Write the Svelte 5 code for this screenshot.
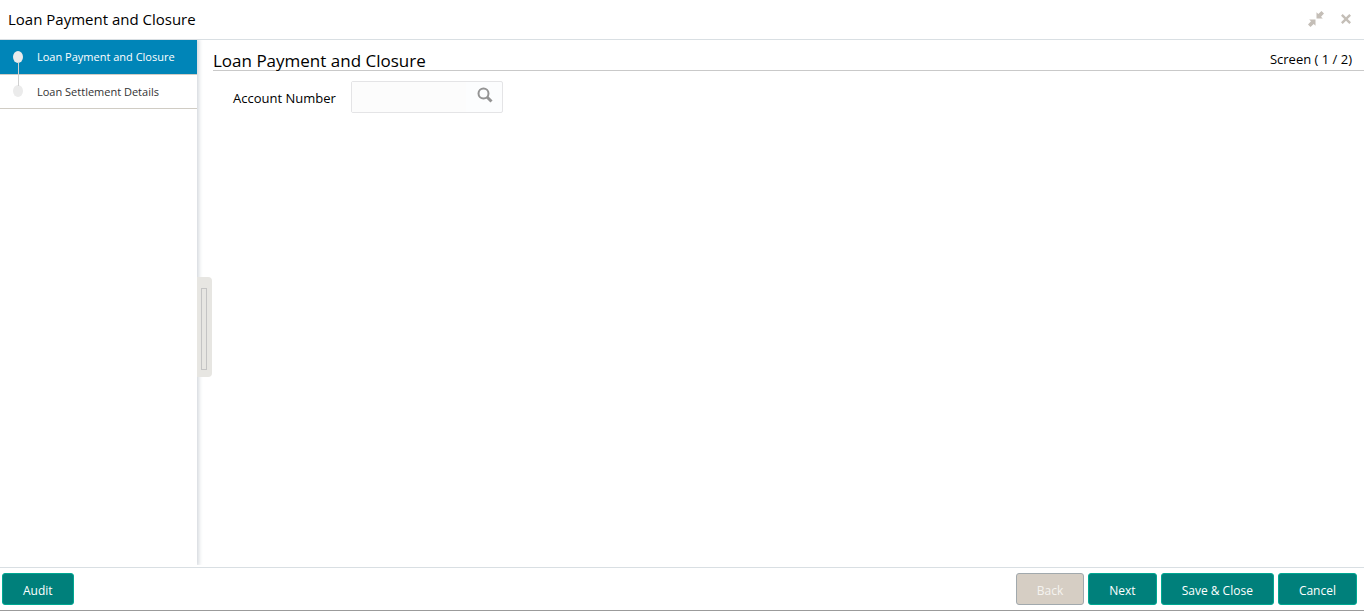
<script lang="ts">
  const title = 'Loan Payment and Closure';
  const steps = ['Loan Payment and Closure', 'Loan Settlement Details'];

  let current = $state(0);
  let account = $state('');

  function back() {
    if (current > 0) current -= 1;
  }

  function next() {
    if (current < steps.length - 1) current += 1;
  }
</script>

<div class="window">
  <header class="titlebar">
    <h1>{title}</h1>
    <div class="tools">
      <button class="tool" aria-label="Collapse">
        <svg width="16" height="16" viewBox="0 0 16 16">
          <path d="M8.5 7.5V1.2L10.3 3L13.5 0L16 2.5L13 5.7L14.8 7.5Z" />
          <path d="M7.5 8.5V14.8L5.7 13L2.5 16L0 13.5L3 10.3L1.2 8.5Z" />
        </svg>
      </button>
      <button class="tool" aria-label="Close">
        <svg width="10" height="10" viewBox="0 0 10 10">
          <path d="M0 1.7L1.7 0L5 3.3L8.3 0L10 1.7L6.7 5L10 8.3L8.3 10L5 6.7L1.7 10L0 8.3L3.3 5Z" />
        </svg>
      </button>
    </div>
  </header>

  <div class="body">
    <nav class="steps">
      {#each steps as step, i}
        <button class="step" class:active={i === current} onclick={() => (current = i)}>
          <span class="dot"></span>
          {step}
        </button>
      {/each}
      <span class="handle"></span>
    </nav>

    <main>
      <div class="heading">
        <h2>{steps[current]}</h2>
        <span>Screen ( {current + 1} / {steps.length})</span>
      </div>
      <div class="field">
        <label for="account">Account Number</label>
        <div class="lookup">
          <input id="account" type="text" bind:value={account} />
          <button aria-label="Search">
            <svg width="16" height="16" viewBox="0 0 16 16">
              <circle cx="6.5" cy="6.5" r="5" />
              <path d="M10 10L14.5 14.5" />
            </svg>
          </button>
        </div>
      </div>
    </main>
  </div>

  <footer>
    <button class="action audit">Audit</button>
    <button class="action" disabled={current === 0} onclick={back}>Back</button>
    <button class="action" onclick={next}>Next</button>
    <button class="action">Save &amp; Close</button>
    <button class="action">Cancel</button>
  </footer>
</div>

<style>
  :global(body) {
    margin: 0;
    background: #fff;
  }
  .window {
    display: flex;
    flex-direction: column;
    box-sizing: border-box;
    height: 100vh;
    border-bottom: 1px solid #9b9b9b;
    color: #000;
    font-family: 'Segoe UI', 'Open Sans', 'Noto Sans', sans-serif;
    font-size: 13px;
  }
  h1,
  h2 {
    margin: 0;
    font-weight: 400;
  }
  button {
    padding: 0;
    border: 0;
    background: none;
    color: inherit;
    font: inherit;
    cursor: pointer;
  }
  svg {
    display: block;
  }
  .titlebar {
    display: flex;
    align-items: center;
    justify-content: space-between;
    height: 38px;
    padding: 0 13px 1px 8px;
    border-bottom: 1px solid #d9dfe3;
  }
  h1 {
    font-size: 15px;
  }
  .tools {
    display: flex;
    align-items: center;
    gap: 17px;
  }
  .tool {
    fill: #c4beb7;
  }
  .body {
    display: flex;
    flex: 1;
    min-height: 0;
    padding-bottom: 2px;
  }
  .steps {
    position: relative;
    flex: none;
    width: 197px;
    box-shadow: 1px 0 4px 1px #d4d8dd;
    clip-path: inset(0 -16px 0 0);
  }
  .step {
    position: relative;
    display: flex;
    align-items: center;
    gap: 14px;
    width: 100%;
    height: 34px;
    padding: 0 0 1px 13px;
    border-bottom: 1px solid #d0ccc4;
    color: #333;
    font-size: 11px;
  }
  .step:first-of-type {
    height: 35px;
  }
  .step.active {
    background: #0085b8;
    color: #fff;
  }
  .dot {
    width: 10px;
    height: 12px;
    border-radius: 50%;
    background: #ebebeb;
  }
  .step:not(:last-of-type)::after {
    content: '';
    position: absolute;
    z-index: 1;
    top: 22px;
    left: 18px;
    width: 1px;
    height: 24px;
    background: #d0d0d0;
  }
  .handle {
    position: absolute;
    top: calc(50% - 26px);
    left: 197px;
    box-sizing: border-box;
    width: 15px;
    height: 100px;
    border-radius: 0 4px 4px 0;
    background: #e7e6e2;
  }
  .handle::after {
    content: '';
    position: absolute;
    inset: 11px 5px 7px 4px;
    border: 1px solid #c4c4c4;
  }
  main {
    flex: 1;
    padding-left: 16px;
  }
  .heading {
    display: flex;
    align-items: flex-end;
    justify-content: space-between;
    height: 30px;
    padding-right: 12px;
    border-bottom: 1px solid #c9c9c9;
  }
  h2 {
    font-size: 17px;
    line-height: 18px;
  }
  .heading span {
    line-height: 22px;
  }
  .field {
    display: flex;
    align-items: center;
    gap: 15px;
    padding: 10px 20px;
  }
  .field label {
    padding-top: 2px;
  }
  .lookup {
    display: flex;
    box-sizing: border-box;
    width: 152px;
    height: 32px;
    border: 1px solid #e4e4e6;
    border-radius: 2px;
    background: #fcfdfe;
  }
  .lookup input {
    flex: 1;
    min-width: 0;
    padding: 0 6px;
    border: 0;
    outline: none;
    background: #fcfcfc;
    font: inherit;
  }
  .lookup button {
    width: 36px;
    padding: 0 9px 4px 11px;
  }
  .lookup svg {
    fill: none;
    stroke: #949494;
    stroke-width: 2;
  }
  .lookup path {
    stroke-width: 3;
  }
  footer {
    display: flex;
    gap: 4px;
    padding: 5px 7px 5px 2px;
    border-top: 1px solid #d9dfe3;
  }
  .action {
    height: 32px;
    padding: 2px 20px 0;
    border: 1px solid #00a892;
    border-radius: 3px;
    background: #00807b;
    color: #fff;
    font-size: 12px;
  }
  .action:disabled {
    border-color: #a1a9ad;
    background: #d6cec4;
    color: #f5f3f0;
    cursor: default;
  }
  .audit {
    margin-right: auto;
  }
</style>
